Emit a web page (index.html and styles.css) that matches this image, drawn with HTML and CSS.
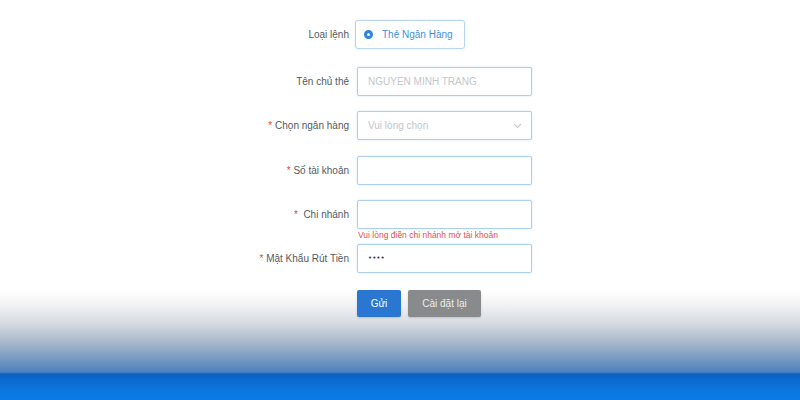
FILE: index.html
```html
<!DOCTYPE html>
<html lang="vi">
<head>
<meta charset="utf-8">
<link rel="stylesheet" href="styles.css">
</head>
<body>
<div class="page">
  <form class="form">
    <div class="row row-first">
      <label class="label">Loại lệnh</label>
      <div class="field">
        <span class="radio-box"><span class="radio-dot"></span>Thẻ Ngân Hàng</span>
      </div>
    </div>
    <div class="row">
      <label class="label">Tên chủ thẻ</label>
      <div class="field"><div class="input placeholder">NGUYEN MINH TRANG</div></div>
    </div>
    <div class="row">
      <label class="label"><span class="req">*</span> Chọn ngân hàng</label>
      <div class="field"><div class="input placeholder select">Vui lòng chọn
        <svg class="chev" width="9" height="6" viewBox="0 0 9 6"><path d="M1 1l3.5 3.5L8 1" fill="none" stroke="#c4c8cc" stroke-width="1.1"/></svg></div></div>
    </div>
    <div class="row">
      <label class="label"><span class="req">*</span> Số tài khoản</label>
      <div class="field"><div class="input"></div></div>
    </div>
    <div class="row row-err">
      <label class="label"><span class="req">*</span>&nbsp; Chi nhánh</label>
      <div class="field"><div class="input"></div><div class="err">Vui lòng điền chi nhánh mở tài khoản</div></div>
    </div>
    <div class="row">
      <label class="label"><span class="req">*</span> Mật Khẩu Rút Tiền</label>
      <div class="field"><div class="input pwd">••••</div></div>
    </div>
    <div class="row row-btn">
      <span></span>
      <div class="btns">
        <button type="button" class="btn btn-primary">Gửi</button>
        <button type="button" class="btn btn-gray">Cài đặt lại</button>
      </div>
    </div>
  </form>
</div>
</body>
</html>
```
FILE: styles.css
```css
html, body {
  margin: 0;
  padding: 0;
}
body {
  width: 800px;
  height: 400px;
  overflow: hidden;
  font-family: "Liberation Sans", Arial, sans-serif;
}
.page {
  height: 400px;
  background: linear-gradient(to bottom,
    #ffffff 0px,
    #ffffff 290px,
    #f1f2f4 305px,
    #d9dde3 322px,
    #aebccc 340px,
    #7f9fc3 356px,
    #5a88c0 368px,
    #4f82c2 372px,
    #0b60c2 374px,
    #0b6ad0 380px,
    #0b78e2 392px,
    #0c7be6 400px);
}
.form {
  padding-top: 20px;
  display: flex;
  flex-direction: column;
}
.row {
  display: grid;
  grid-template-columns: 349px 176px;
  column-gap: 8px;
  align-items: start;
  margin-bottom: 15.3px;
}
.row-first { margin-bottom: 18px; }
.row-btn { margin-top: 1.5px; }
.label {
  height: 29px;
  line-height: 29px;
  text-align: right;
  font-size: 10px;
  color: #555a60;
}
.req { color: #e04848; }
.field {
  position: relative;
}
.radio-box {
  display: inline-flex;
  align-items: center;
  box-sizing: border-box;
  height: 29px;
  width: 110px;
  margin-left: -2px;
  padding-left: 8px;
  border: 1px solid #b8d6f0;
  border-radius: 3px;
  color: #3f90de;
  font-size: 10px;
  box-shadow: 0 0 2px rgba(120,170,220,0.35);
}
.radio-dot {
  box-sizing: border-box;
  width: 9px;
  height: 9px;
  border-radius: 50%;
  background: #2d85e0;
  border: 3px solid #2d85e0;
  margin-right: 9px;
  position: relative;
}
.radio-dot::after {
  content: "";
  position: absolute;
  left: 0;
  top: 0;
  width: 3px;
  height: 3px;
  border-radius: 50%;
  background: #ffffff;
}
.input {
  box-sizing: border-box;
  height: 29px;
  width: 175px;
  border: 1px solid #add0ee;
  border-radius: 2px;
  padding-left: 10px;
  line-height: 27px;
  font-size: 10px;
  color: #333;
  background: #fff;
  box-shadow: 0 0 2px rgba(120,170,220,0.4);
}
.placeholder { color: #c2c6cb; }
.select {
  display: flex;
  align-items: center;
  justify-content: space-between;
  padding-right: 9px;
}
.pwd {
  font-family: "DejaVu Sans", sans-serif;
  font-size: 7px;
  letter-spacing: 0;
  color: #333;
}
.err {
  position: absolute;
  left: 1px;
  top: 30px;
  font-size: 8.5px;
  color: #e45050;
  white-space: nowrap;
}
.btns {
  display: flex;
  gap: 7px;
}
.btn {
  height: 27px;
  border: none;
  border-radius: 2px;
  font-family: "Liberation Sans", Arial, sans-serif;
  font-size: 10px;
  color: #ffffff;
  padding: 0;
  box-shadow: 0 1px 2px rgba(0,0,0,0.15);
}
.btn-primary {
  width: 44px;
  background: #2a77d2;
}
.btn-gray {
  width: 73px;
  background: #888a8c;
  color: #eeeeee;
}
```
